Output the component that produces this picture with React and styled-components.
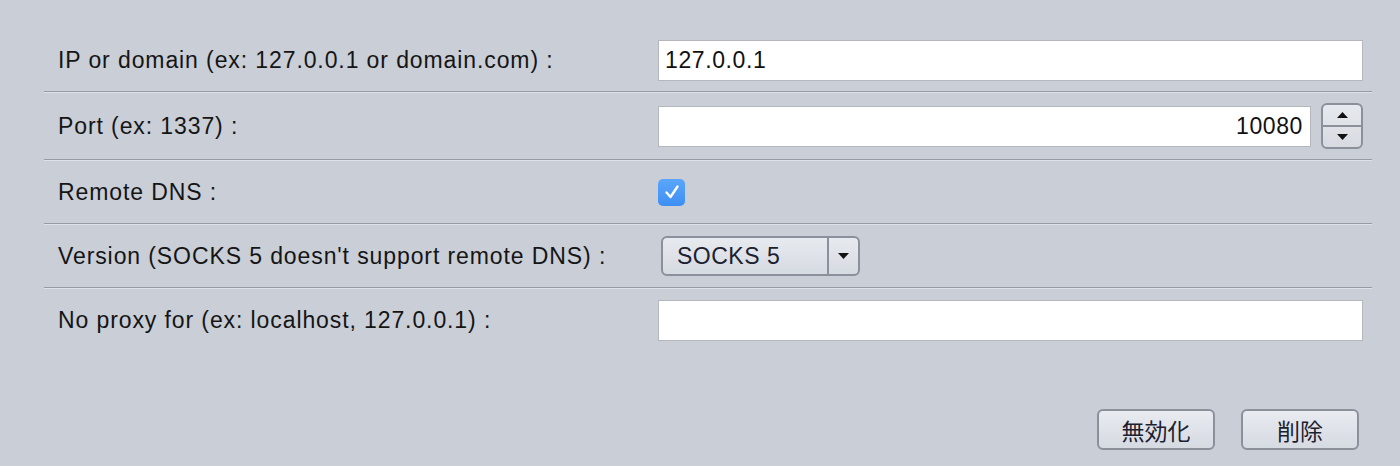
import React, { useState } from 'react'
import styled, { createGlobalStyle } from 'styled-components'

const GlobalStyle = createGlobalStyle`
  html, body {
    margin: 0;
    padding: 0;
    background: #c9ced7;
  }
  body {
    font-family: 'Liberation Sans', Arial, 'Noto Sans CJK JP', sans-serif;
    color: #161616;
  }
`

function Stepper() {
  return (
    <StepperBox>
      <StepButton aria-label='up'>
        <svg width='11' height='6' viewBox='0 0 11 6'>
          <path d='M5.5 0 L11 6 L0 6 Z' fill='#111' />
        </svg>
      </StepButton>
      <StepButton aria-label='down'>
        <svg width='11' height='6' viewBox='0 0 11 6'>
          <path d='M0 0 L11 0 L5.5 6 Z' fill='#111' />
        </svg>
      </StepButton>
    </StepperBox>
  )
}

function App() {
  const [host, setHost] = useState('127.0.0.1')
  const [port, setPort] = useState('10080')
  const [remoteDns, setRemoteDns] = useState(true)
  const [noProxy, setNoProxy] = useState('')

  return (
    <Page>
      <GlobalStyle />
      <Form>
        <Row>
          <Label>IP or domain (ex: 127.0.0.1 or domain.com) :</Label>
          <Field>
            <TextInput value={host} onChange={(e) => setHost(e.currentTarget.value)} />
          </Field>
        </Row>
        <Row>
          <Label>Port (ex: 1337) :</Label>
          <Field>
            <TextInput
              $align='right'
              value={port}
              onChange={(e) => setPort(e.currentTarget.value)}
            />
            <Stepper />
          </Field>
        </Row>
        <Row>
          <Label>Remote DNS :</Label>
          <Field>
            <Checkbox $checked={remoteDns} onClick={() => setRemoteDns(!remoteDns)}>
              {remoteDns && (
                <svg width='18' height='16' viewBox='0 0 18 16'>
                  <path
                    d='M3.5 8.5 L7.5 13 L14.5 2.5'
                    fill='none'
                    stroke='#fff'
                    strokeWidth='2.4'
                    strokeLinecap='round'
                    strokeLinejoin='round'
                  />
                </svg>
              )}
            </Checkbox>
          </Field>
        </Row>
        <Row>
          <Label>Version (SOCKS 5 doesn't support remote DNS) :</Label>
          <Field>
            <Select>
              <SelectValue>SOCKS 5</SelectValue>
              <SelectArrow>
                <svg width='11' height='6' viewBox='0 0 11 6'>
                  <path d='M0 0 L11 0 L5.5 6 Z' fill='#111' />
                </svg>
              </SelectArrow>
            </Select>
          </Field>
        </Row>
        <Row $last>
          <Label>No proxy for (ex: localhost, 127.0.0.1) :</Label>
          <Field>
            <TextInput value={noProxy} onChange={(e) => setNoProxy(e.currentTarget.value)} />
          </Field>
        </Row>
      </Form>
      <Actions>
        <ActionButton>無効化</ActionButton>
        <ActionButton>削除</ActionButton>
      </Actions>
    </Page>
  )
}

const Page = styled.div`
  width: 1400px;
  height: 466px;
  box-sizing: border-box;
  padding: 29px 28px 0 44px;
  background: #c9ced7;
  display: flex;
  flex-direction: column;
`

const Form = styled.div`
  display: flex;
  flex-direction: column;
`

const Row = styled.div`
  display: grid;
  grid-template-columns: 600px 1fr;
  align-items: center;
  min-height: 42px;
  padding: 10px 9px 10px 14px;
  border-bottom: ${(p) => (p.$last ? 'none' : '1px solid #969ba5')};
  box-shadow: ${(p) => (p.$last ? 'none' : '0 1px 0 #dfe2e8')};
  margin-bottom: ${(p) => (p.$last ? '0' : '1px')};
`

const Label = styled.div`
  font-size: 23px;
  letter-spacing: 0.9px;
  color: #151515;
  white-space: nowrap;
`

const Field = styled.div`
  display: flex;
  align-items: center;
  gap: 10px;
`

const TextInput = styled.input`
  flex: 1;
  min-width: 0;
  height: 41px;
  box-sizing: border-box;
  border: 1px solid #b4b7bc;
  background: #fff;
  padding: 0 7px 0 6px;
  font-family: 'Liberation Sans', Arial, sans-serif;
  font-size: 23px;
  letter-spacing: 0.6px;
  color: #111;
  text-align: ${(p) => p.$align || 'left'};
  outline: none;
`

const StepperBox = styled.div`
  width: 42px;
  height: 46px;
  box-sizing: border-box;
  border: 2px solid #8b909b;
  border-radius: 6px;
  background: linear-gradient(#e6e9ee, #d7dbe1);
  display: flex;
  flex-direction: column;
  overflow: hidden;
`

const StepButton = styled.div`
  flex: 1;
  display: flex;
  align-items: center;
  justify-content: center;
  & + & {
    border-top: 2px solid #8b909b;
  }
`

const Checkbox = styled.div`
  width: 27px;
  height: 27px;
  border-radius: 5px;
  background: ${(p) => (p.$checked ? 'linear-gradient(#5aa6fb, #3d8ff3)' : '#fff')};
  display: flex;
  align-items: center;
  justify-content: center;
  cursor: pointer;
`

const Select = styled.div`
  margin-left: 3px;
  width: 199px;
  height: 40px;
  box-sizing: border-box;
  border: 2px solid #8b909b;
  border-radius: 6px;
  background: linear-gradient(#e7eaef, #d6dae1);
  display: flex;
  align-items: stretch;
`

const SelectValue = styled.div`
  flex: 1;
  display: flex;
  align-items: center;
  padding-left: 14px;
  font-size: 23px;
  letter-spacing: 0.5px;
  color: #1b2130;
  border-right: 2px solid #8b909b;
`

const SelectArrow = styled.div`
  width: 29px;
  display: flex;
  align-items: center;
  justify-content: center;
`

const Actions = styled.div`
  display: flex;
  justify-content: flex-end;
  gap: 26px;
  margin-top: auto;
  margin-bottom: 16px;
  padding-right: 13px;
`

const ActionButton = styled.button`
  width: 118px;
  height: 41px;
  box-sizing: border-box;
  border: 2px solid #8b909b;
  border-radius: 6px;
  background: linear-gradient(#e8ebf0, #d6dae1);
  font-family: 'Liberation Sans', 'Noto Sans CJK JP', sans-serif;
  font-size: 23px;
  color: #1b2130;
  padding: 0;
`

export default App
